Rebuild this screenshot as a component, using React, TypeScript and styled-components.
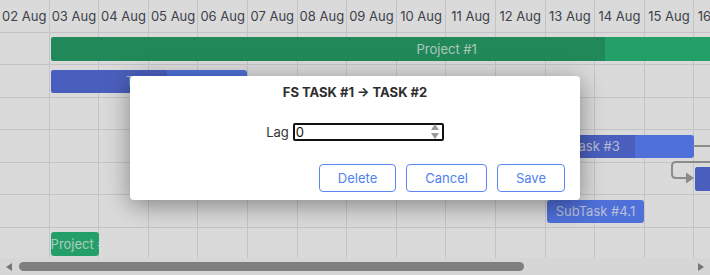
import React from 'react';
import styled, { createGlobalStyle } from 'styled-components';

const COL = 49.6;
const ROW = 32.5;

const days = Array.from({ length: 17 }, (_, i) => `${String(i + 2).padStart(2, '0')} Aug`);

interface ITask {
  name: string;
  start: number;
  duration: number;
  progress: number;
  kind: 'project' | 'task';
}

const rows: ITask[] = [
  { name: 'Project #1', start: 1, duration: 16, progress: 0.7, kind: 'project' },
  { name: 'Task #1', start: 1, duration: 4, progress: 0.59, kind: 'task' },
  { name: 'Task #2', start: 5, duration: 4, progress: 0.4, kind: 'task' },
  { name: 'Task #3', start: 10, duration: 4, progress: 0.7, kind: 'task' },
  { name: 'Task #4', start: 14, duration: 3, progress: 0.5, kind: 'task' },
  { name: 'SubTask #4.1', start: 11, duration: 2, progress: 0, kind: 'task' },
  { name: 'Project #2', start: 1, duration: 1, progress: 0, kind: 'project' },
];

const GlobalStyle = createGlobalStyle`
  html, body {
    margin: 0;
    padding: 0;
    background: #ffffff;
  }
  body {
    font-family: Inter, "Noto Sans", sans-serif;
  }
`;

const App: React.FC = () => {
  return (
    <>
      <GlobalStyle />
      <Frame>
        <Scroller>
          <Canvas>
            <HeaderRow>
              {days.map((d) => (
                <HeaderCell key={d}>{d}</HeaderCell>
              ))}
            </HeaderRow>

            {rows.map((task) => (
              <Row key={task.name}>
                {days.map((d) => (
                  <Cell key={d} />
                ))}
                <Bar $kind={task.kind} style={{ left: task.start * COL + 1, width: task.duration * COL - 1.5 }}>
                  <Progress $kind={task.kind} style={{ width: `${task.progress * 100}%` }} />
                  <BarLabel>{task.name}</BarLabel>
                </Bar>
              </Row>
            ))}

            {/* dependency links */}
            <Links width={days.length * COL} height={300}>
              <path d="M693 146 H760" fill="none" stroke="#a3a3a3" strokeWidth="2" />
              <path
                d="M760 162 H676 Q672 162 672 166 V174 Q672 178 676 178 H688"
                fill="none"
                stroke="#a3a3a3"
                strokeWidth="2"
              />
              <path d="M686 172.5 L694 178 L686 183.5 Z" fill="#a3a3a3" />
            </Links>
          </Canvas>
        </Scroller>

        <ScrollTrack>
          <Arrow viewBox="0 0 6 8">
            <path d="M6 0 V8 L0 4 Z" fill="#8a8a8a" />
          </Arrow>
          <Thumb />
          <Spacer />
          <Arrow viewBox="0 0 6 8">
            <path d="M0 0 V8 L6 4 Z" fill="#8a8a8a" />
          </Arrow>
        </ScrollTrack>

        <Overlay>
          <Modal>
            <ModalTitle>FS TASK #1 → TASK #2</ModalTitle>
            <ModalBody>
              <Label>Lag</Label>
              <NumberBox>
                <NumberInput defaultValue="0" />
                <Spinner viewBox="0 0 8 15">
                  <path d="M4 0 L8 6 H0 Z" fill="#9a9a9a" />
                  <path d="M0 9 H8 L4 15 Z" fill="#9a9a9a" />
                </Spinner>
              </NumberBox>
            </ModalBody>
            <ModalFooter>
              <Button>Delete</Button>
              <Button>Cancel</Button>
              <Button>Save</Button>
            </ModalFooter>
          </Modal>
        </Overlay>
      </Frame>
    </>
  );
};

export default App;

const Frame = styled.div`
  position: relative;
  width: 710px;
  height: 275px;
  overflow: hidden;
  display: flex;
  flex-direction: column;
  background: #ffffff;
`;

const Scroller = styled.div`
  flex: 1;
  overflow: hidden;
`;

const Canvas = styled.div`
  position: relative;
  width: ${days.length * COL}px;
`;

const HeaderRow = styled.div`
  display: grid;
  grid-template-columns: repeat(${days.length}, ${COL}px);
  height: ${ROW}px;
  border-bottom: 1px solid #e4e4e6;
  box-sizing: border-box;
`;

const HeaderCell = styled.div`
  display: flex;
  align-items: center;
  justify-content: center;
  border-right: 1px solid #e4e4e6;
  font-size: 13px;
  color: #4a4e58;
  white-space: nowrap;
`;

const Row = styled.div`
  position: relative;
  display: grid;
  grid-template-columns: repeat(${days.length}, ${COL}px);
  height: ${ROW}px;
  border-bottom: 1px solid #e6e6e8;
  box-sizing: border-box;
`;

const Cell = styled.div`
  border-right: 1px solid #e6e6e8;
`;

interface IKindProps {
  $kind: 'project' | 'task';
}

const Bar = styled.div<IKindProps>`
  position: absolute;
  top: 4.5px;
  height: 23.5px;
  border-radius: 3px;
  overflow: hidden;
  display: flex;
  align-items: center;
  background: ${({ $kind }) => ($kind === 'project' ? '#2bbb7c' : '#5c83fd')};
`;

const Progress = styled.div<IKindProps>`
  position: absolute;
  left: 0;
  top: 0;
  bottom: 0;
  background: ${({ $kind }) => ($kind === 'project' ? '#27a169' : '#5770dd')};
`;

const BarLabel = styled.span`
  position: relative;
  flex: 1;
  min-width: 0;
  text-align: center;
  white-space: nowrap;
  overflow: hidden;
  font-size: 13px;
  color: rgba(255, 255, 255, 0.76);
`;

const Links = styled.svg`
  position: absolute;
  left: 0;
  top: 0;
  pointer-events: none;
  overflow: visible;
`;

const ScrollTrack = styled.div`
  height: 17px;
  flex: none;
  display: flex;
  align-items: center;
  padding: 0 6px;
  gap: 7px;
  background: #fbfbfb;
`;

const Arrow = styled.svg`
  width: 6px;
  height: 8px;
  flex: none;
`;

const Thumb = styled.div`
  width: 505px;
  height: 9px;
  border-radius: 5px;
  background: #949494;
`;

const Spacer = styled.div`
  flex: 1;
`;

const Overlay = styled.div`
  position: absolute;
  inset: 0;
  display: flex;
  align-items: center;
  justify-content: center;
  background: rgba(0, 0, 0, 0.145);
`;

const Modal = styled.div`
  width: 450px;
  background: #ffffff;
  border-radius: 4px;
  box-shadow: 0 5px 24px rgba(0, 0, 0, 0.4);
  display: flex;
  flex-direction: column;
`;

const ModalTitle = styled.div`
  height: 32px;
  display: flex;
  align-items: center;
  justify-content: center;
  font-size: 13px;
  font-weight: 700;
  color: #2e2e2e;
`;

const ModalBody = styled.div`
  display: flex;
  align-items: center;
  justify-content: center;
  gap: 4px;
  padding: 15px 0;
`;

const Label = styled.span`
  font-size: 13px;
  color: #333333;
`;

const NumberBox = styled.div`
  width: 151px;
  height: 18px;
  box-sizing: border-box;
  border: 2px solid #111111;
  border-radius: 2px;
  display: flex;
  align-items: center;
  padding: 0 3px 0 1px;
`;

const NumberInput = styled.input`
  flex: 1;
  min-width: 0;
  border: none;
  outline: none;
  padding: 0;
  font-family: Inter, "Noto Sans", sans-serif;
  font-size: 13px;
  color: #111111;
  background: transparent;
`;

const Spinner = styled.svg`
  width: 8px;
  height: 15px;
  flex: none;
`;

const ModalFooter = styled.div`
  display: flex;
  justify-content: flex-end;
  gap: 10px;
  padding: 8px 15px 8px;
`;

const Button = styled.button`
  height: 28px;
  padding: 0 18px;
  border: 1px solid #5b86f2;
  border-radius: 4px;
  background: #ffffff;
  font-family: Inter, "Noto Sans", sans-serif;
  font-size: 13px;
  color: #4f7ff0;
  cursor: pointer;
`;
